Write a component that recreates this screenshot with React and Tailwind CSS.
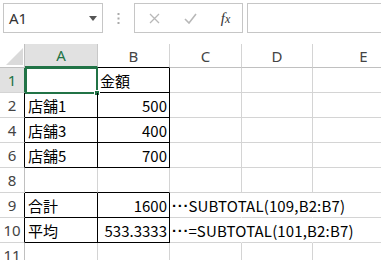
import React from "react";

const font = { fontFamily: '"Noto Sans CJK JP", "Noto Sans", sans-serif' };

const rows = [
  { n: 1, a: "", b: "金額", bLeft: true, bordered: true, sel: true },
  { n: 2, a: "店舗1", b: "500", bordered: true },
  { n: 4, a: "店舗3", b: "400", bordered: true },
  { n: 6, a: "店舗5", b: "700", bordered: true },
  { n: 8, nextBordered: true },
  { n: 9, a: "合計", b: "1600", c: "SUBTOTAL(109,B2:B7)", bordered: true },
  { n: 10, a: "平均", b: "533.3333", c: "=SUBTOTAL(101,B2:B7)", bordered: true },
  { n: 11 },
];

function Toolbar() {
  return (
    <div className="flex h-[44px] items-start bg-white pl-[3px] pt-[3px]">
      <div className="flex h-[30px] w-[100px] items-center justify-between border border-[#c6c6c6] pl-[5px] pr-[5px]">
        <span className="text-[15px] text-[#333]" style={{ fontFamily: '"Noto Sans", sans-serif' }}>A1</span>
        <svg width="8" height="5" viewBox="0 0 8 5"><path d="M0 0 L8 0 L4 5 Z" fill="#555" /></svg>
      </div>
      <div className="flex h-[30px] w-[31px] items-center justify-center">
        <svg width="3" height="11" viewBox="0 0 3 11">
          <rect x="0.5" y="0" width="2" height="2" fill="#aaa" />
          <rect x="0.5" y="4.5" width="2" height="2" fill="#aaa" />
          <rect x="0.5" y="9" width="2" height="2" fill="#aaa" />
        </svg>
      </div>
      <div className="flex h-[30px] w-[109px] items-center border border-[#c6c6c6]">
        <div className="flex w-[37px] justify-center pl-[1px]">
          <svg width="11" height="11" viewBox="0 0 11 11"><path d="M1 1 L10 10 M10 1 L1 10" stroke="#b8b8b8" strokeWidth="1.3" fill="none" /></svg>
        </div>
        <div className="flex w-[37px] justify-center">
          <svg width="13" height="11" viewBox="0 0 13 11"><path d="M1 6 L5 10 L12 1" stroke="#b8b8b8" strokeWidth="1.6" fill="none" /></svg>
        </div>
        <div className="flex w-[33px] justify-center">
          <span className="text-[15px] italic text-[#333]" style={{ fontFamily: '"Liberation Serif", serif' }}>
            f<span className="text-[12px]">x</span>
          </span>
        </div>
      </div>
      <div className="ml-[4px] h-[30px] flex-1 border-y border-l border-[#c6c6c6]" />
    </div>
  );
}

export default function App() {
  return (
    <div className="h-[260px] w-[381px] overflow-hidden bg-white" style={font}>
      <Toolbar />
      <div className="grid grid-cols-[25px_73px_72px_72px_71px_100px] grid-rows-[24px_repeat(8,25px)] text-[15px] text-black">
        {/* header row */}
        <div className="relative border-r border-b border-[#c0c0c0] bg-white">
          <svg className="absolute left-[6px] top-[4px]" width="17" height="17" viewBox="0 0 17 17">
            <path d="M17 0 L17 17 L0 17 Z" fill="#dadada" />
          </svg>
        </div>
        <div className="flex items-center justify-center border-r border-b-2 border-r-[#c8c8c8] border-b-[#217346] bg-[#e1e1e1] pt-[1px] text-[15px] text-[#217346]" style={{ fontFamily: '"Noto Sans", sans-serif' }}>A</div>
        <div className="flex items-center justify-center border-r border-b border-r-[#d4d4d4] border-b-[#000] bg-white pt-[1px] text-[15px] text-[#444]" style={{ fontFamily: '"Noto Sans", sans-serif' }}>B</div>
        <div className="flex items-center justify-center border-r border-b border-r-[#d4d4d4] border-b-[#c0c0c0] bg-white pt-[1px] text-[15px] text-[#444]" style={{ fontFamily: '"Noto Sans", sans-serif' }}>C</div>
        <div className="flex items-center justify-center border-r border-b border-r-[#d4d4d4] border-b-[#c0c0c0] bg-white pt-[1px] text-[15px] text-[#444]" style={{ fontFamily: '"Noto Sans", sans-serif' }}>D</div>
        <div className="flex items-center justify-center border-r border-b border-r-[#d4d4d4] border-b-[#c0c0c0] bg-white pl-[2px] pt-[1px] text-[15px] text-[#444]" style={{ fontFamily: '"Noto Sans", sans-serif' }}>E</div>

        {rows.map((r) => {
          const black = r.bordered;
          const bottomBlack = r.bordered || r.nextBordered;
          return (
            <React.Fragment key={r.n}>
              <div
                className={
                  "flex items-center justify-center border-r border-b border-b-[#d4d4d4] pt-[1px] text-[15px] " +
                  (r.sel ? "bg-[#e1e1e1] text-[#217346] border-r-[#217346]" : "bg-white text-[#444] ") +
                  (!r.sel && black ? "border-r-black" : !r.sel ? "border-r-[#c0c0c0]" : "")
                }
                style={{ fontFamily: '"Noto Sans", sans-serif' }}
              >
                {r.n}
              </div>
              <div
                className={
                  "relative flex items-center whitespace-nowrap border-r border-b pl-[3px] pt-[2px] " +
                  (black ? "border-r-black " : "border-r-[#d4d4d4] ") +
                  (bottomBlack ? "border-b-black" : "border-b-[#d4d4d4]")
                }
              >
                {r.a}
                {r.sel && (
                  <div className="absolute left-0 top-[-1px] h-[27px] w-[73px] border-2 border-[#217346]">
                    <div className="absolute bottom-[-4px] right-[-4px] h-[6px] w-[6px] border border-white bg-[#217346]" />
                  </div>
                )}
              </div>
              <div
                className={
                  "flex items-center whitespace-nowrap border-r border-b pt-[2px] " +
                  (r.bLeft ? "justify-start pl-[2px] " : "justify-end pr-[2px] ") +
                  (black ? "border-r-black " : "border-r-[#d4d4d4] ") +
                  (bottomBlack ? "border-b-black" : "border-b-[#d4d4d4]")
                }
              >
                {r.b}
              </div>
              <div
                className={
                  "flex items-center overflow-visible whitespace-nowrap border-r border-b border-b-[#d4d4d4] pl-[2px] pt-[2px] tracking-[0.15px] " +
                  (r.c ? "border-r-transparent" : "border-r-[#d4d4d4]")
                }
              >
                {r.c && (
                  <span className="mr-[-1px] font-bold tracking-[0.8px]" style={{ fontFamily: '"Liberation Sans", sans-serif' }}>···</span>
                )}
                {r.c || ""}
              </div>
              <div className={"border-r border-b border-b-[#d4d4d4] " + (r.c ? "border-r-transparent" : "border-r-[#d4d4d4]")} />
              <div className="border-r border-b border-r-[#d4d4d4] border-b-[#d4d4d4]" />
            </React.Fragment>
          );
        })}
      </div>
    </div>
  );
}
